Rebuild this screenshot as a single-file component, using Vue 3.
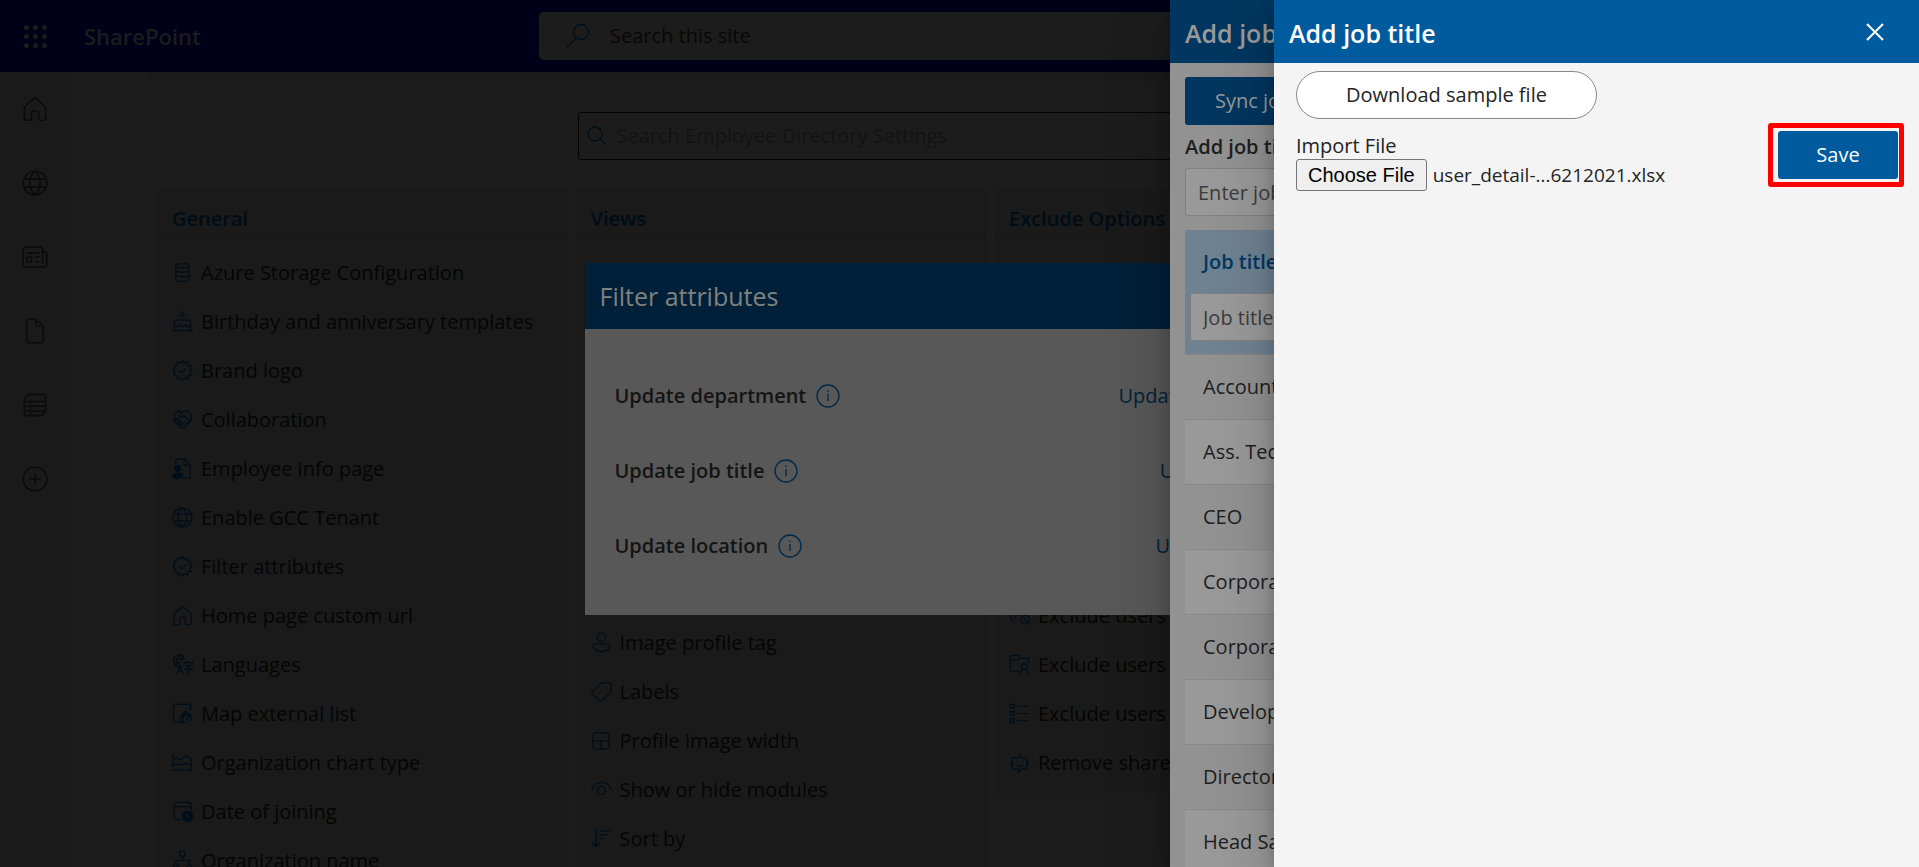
<script setup>
import { onMounted, ref } from 'vue'

const fileInput = ref(null)

onMounted(() => {
  const transfer = new DataTransfer()
  transfer.items.add(new File([''], 'user_detail-...6212021.xlsx'))
  fileInput.value.files = transfer.files
})

// Outline of a twelve-pointed seal centred on 11,11.
const seal = Array.from({ length: 24 }, (_, i) => {
  const r = i % 2 ? 8 : 10.3
  const a = (i * Math.PI) / 12
  return `${(11 + r * Math.sin(a)).toFixed(1)} ${(11 - r * Math.cos(a)).toFixed(1)}`
}).join('L')

const icons = {
  home: 'M2 9.5 11 1l9 8.500V19.500a1 1 0 0 1-1 1h-4a1 1 0 0 1-1-1V14a1 1 0 0 0-1-1h-4a1 1 0 0 0-1 1v5.500a1 1 0 0 1-1 1H3a1 1 0 0 1-1-1z',
  globe: 'M11 1a10 10 0 1 0 0 20 10 10 0 0 0 0-20zM11 1c-6 5-6 15 0 20M11 1c6 5 6 15 0 20M2 7.500h18M2 14.500h18',
  news: 'M17.500 16V5a2.500 2.500 0 0 0-2.500-2.500H3.500A2.500 2.500 0 0 0 1 5v12a2.500 2.500 0 0 0 2.500 2.500h15A2.500 2.500 0 0 0 21 17V8.500a2 2 0 0 0-2-2h-1.500M4 7.500h11M4 11h4v4H4zM11 11h4M11 15h4',
  doc: 'M6 1h6l6 6v12a2 2 0 0 1-2 2H6a2 2 0 0 1-2-2V3a2 2 0 0 1 2-2zM12 1v4.500A1.500 1.500 0 0 0 13.500 7H18',
  list: 'M6 2h12a2 2 0 0 1 2 2v12l-4 4H4a2 2 0 0 1-2-2V6zM2 8h18M2 12h18M2 16h17M7 8v12',
  plus: 'M11 1a10 10 0 1 0 0 20 10 10 0 0 0 0-20zM11 6v10M6 11h10',
  database: 'M4 4c0-3 14-3 14 0v14c0 3-14 3-14 0zM4 4c0 3 14 3 14 0M4 8.500c0 3 14 3 14 0M4 13c0 3 14 3 14 0',
  cake: 'M11 0.500c-2.500 3.500-2.500 5.500 0 5.500s2.500-2 0-5.500M0.500 20.500h21M2.500 20V11a1.500 1.500 0 0 1 1.500-1.500h14a1.500 1.500 0 0 1 1.500 1.500v9M2.500 14l3.500 3 2.500-3 2.500 3 2.500-3 2.500 3 3.500-3',
  badge: `M${seal}zM7.500 11l2.500 2.500 4.500-4.500`,
  hands: 'M3 11 2 7l4-5 5 1 5-1 4 4v6l-8 8-3-1-6-6 2-3 3 2 1 2 2 1 1 2 1 1M11 3 8 7c1 2 3 2 4 0l8 6M6 15l3-3M8 17l3-2M1 11l3 4M14 17l2-1-3-3M16 15l2-1',
  folderUser: 'M10 18H1.500V1.500h8l2 3h9V10M1.500 6h8l2-1.500M16 10a3 3 0 1 0 0 6 3 3 0 0 0 0-6M11.500 21.500c0-7 9-7 9 0',
  lang: 'M7.500 1a6 6 0 1 0 0 12M7.500 1a6 6 0 0 1 5.500 4M7.500 1c-3 3-3 8-1 11M7.500 1c2 1 2.500 3 2.500 6M1.500 5h12M1.500 9h7M5.500 20.500l3-8.500 3 8.500M6.500 18h4M13 11V9h8.500v2M17 7v2M14.500 12.500h5l-2.500 2v5l-1.500 1M13 16h9',
  map: 'M6 19.500H1.500V1.500h18V8M9 20.500V14l5-5.500 7 6M7 20.500h7M11.500 20V14l3-3 1.500 1.500v7M17 12l4 7M9 15l5-5',
  chart: 'M1 2v17h20.500M1.500 8l4-1.500 3.500 2 6-5 5 4.500v11M1.500 13.500c5-2 7 2 11-1 3-2 5 0 7 1.500',
  calendar: 'M9 19.500H5A3 3 0 0 1 2 16.500v-12a3 3 0 0 1 3-3h12a3 3 0 0 1 3 3V10M2 6h18',
  org: 'M8.500 1.500h5v5h-5zM11 7v4M4 16v-5h14v5M1.500 16h5v5h-5zM15.500 16h5v5h-5z',
  person: 'M11 1a4.500 4.500 0 1 0 0 9 4.500 4.500 0 0 0 0-9M4 12.500h14a2 2 0 0 1 2 2c0 8-18 8-18 0a2 2 0 0 1 2-2z',
  tag: 'M11 2h8a2 2 0 0 1 2 2v7l-9 9.500a2 2 0 0 1-3 0L1.500 14a2 2 0 0 1 0-3zM16.500 6v1.500',
  layout: 'M5 3h11a3 3 0 0 1 3 3v11a3 3 0 0 1-3 3H5a3 3 0 0 1-3-3V6a3 3 0 0 1 3-3zM2 11.500h17M10.500 11.500V20',
  eye: 'M1 11.500C4 1 18 1 21 11.500M11 7.500a4.300 4.300 0 1 0 0 8.600 4.300 4.300 0 0 0 0-8.600',
  sort: 'M5.500 1v18.500M1.500 15.500l4 4 4-4M9 3h11M9 7h8M9 11h5',
  block: 'M2 5c-2 4 0 10 2 12M6 6c-2 3 0 8 1 9M10 8c0 4 3 4 4 0M17 11a4.500 4.500 0 1 0 0 9 4.500 4.500 0 0 0 0-9M14 12.500l6 6',
  checklist: 'M1.500 1.500h4v4h-4zM1.500 9h4v4h-4zM1.500 16.500h4v4h-4zM7.500 3.500h4M13.500 3.500H21M7.500 11h5M14.500 11H21M7.500 18.500h4M13.500 18.500H21',
  bot: 'M11 1v5M5 6h12a1.500 1.500 0 0 1 1.500 1.500v9A1.500 1.500 0 0 1 17 18h-4l-3 3v-3H5a1.500 1.500 0 0 1-1.500-1.500v-9A1.500 1.500 0 0 1 5 6zM2 9.500v4M20 9.500v4M7 13.500c2 2 6 2 8 0M8 9.500v1M14 9.500v1',
  page: 'M4 6V3a2 2 0 0 1 2-2h7l6 6v12a2 2 0 0 1-2 2h-5M12.500 1v5a1.500 1.500 0 0 0 1.500 1.500h5'
}

const nav = [
  { label: 'Home', icon: 'home' },
  { label: 'Sites', icon: 'globe' },
  { label: 'News', icon: 'news' },
  { label: 'Files', icon: 'doc' },
  { label: 'Lists', icon: 'list' },
  { label: 'Create', icon: 'plus' }
]

const groups = [
  {
    name: 'General',
    mod: 'general',
    items: [
      ['database', 'Azure Storage Configuration'],
      ['cake', 'Birthday and anniversary templates'],
      ['badge', 'Brand logo'],
      ['hands', 'Collaboration'],
      ['page', 'Employee info page'],
      ['globe', 'Enable GCC Tenant'],
      ['badge', 'Filter attributes'],
      ['home', 'Home page custom url'],
      ['lang', 'Languages'],
      ['map', 'Map external list'],
      ['chart', 'Organization chart type'],
      ['calendar', 'Date of joining'],
      ['org', 'Organization name']
    ]
  },
  {
    name: 'Views',
    mod: 'views',
    items: [
      ['person', 'Image profile tag'],
      ['tag', 'Labels'],
      ['layout', 'Profile image width'],
      ['eye', 'Show or hide modules'],
      ['sort', 'Sort by']
    ]
  },
  {
    name: 'Exclude Options',
    mod: 'exclude',
    items: [
      ['block', 'Exclude users b'],
      ['folderUser', 'Exclude users c'],
      ['checklist', 'Exclude users b'],
      ['bot', 'Remove shared']
    ]
  }
]

const attributes = ['Update department', 'Update job title', 'Update location']
const titles = ['Account', 'Ass. Tech', 'CEO', 'Corporate', 'Corporate', 'Developer', 'Director', 'Head Sales']
</script>

<template>
  <div class="app">
    <header class="suite">
      <button class="waffle" type="button" aria-label="App launcher">
        <i v-for="n in 9" :key="n"></i>
      </button>
      <a class="brand" href="#">SharePoint</a>
      <label class="site-search">
        <svg viewBox="0 0 26 26" width="26" height="26"><circle cx="16" cy="9" r="7.500" /><path d="M11 15 2 24.500" /></svg>
        <input type="search" placeholder="Search this site" aria-label="Search this site" />
      </label>
    </header>

    <div class="main">
      <nav class="rail">
        <a v-for="n in nav" :key="n.label" href="#" :aria-label="n.label">
          <svg viewBox="0 0 22 22" width="26" height="26"><path :d="icons[n.icon]" /></svg>
        </a>
      </nav>
      <main class="content">
        <div class="strip"></div>
        <label class="settings-search">
          <svg viewBox="0 0 20 20" width="20" height="20"><circle cx="8" cy="8" r="7" /><path d="m13 13 6 6" /></svg>
          <input type="search" placeholder="Search Employee Directory Settings" aria-label="Search Employee Directory Settings" />
        </label>
        <div class="cards">
          <section v-for="g in groups" :key="g.name" class="card">
            <h2>{{ g.name }}</h2>
            <ul :class="g.mod">
              <li v-for="(it, i) in g.items" :key="i">
                <a href="#">
                  <svg viewBox="0 0 22 22" width="21" height="21">
                    <path :d="icons[it[0]]" />
                    <g v-if="it[0] === 'page'" class="solid"><circle cx="6" cy="11" r="3" /><path d="M1 18c0-3 10-3 10 0s-10 5-10 0z" /></g>
                    <g v-if="it[0] === 'calendar'"><circle class="solid" cx="16" cy="16" r="5.500" /><path class="hand" d="M16 13v3.500h3" /></g>
                  </svg>
                  <span>{{ it[1] }}</span>
                </a>
              </li>
            </ul>
          </section>
        </div>
      </main>
    </div>

    <section class="modal" role="dialog" aria-label="Filter attributes">
      <h2>Filter attributes</h2>
      <div class="modal-body">
        <div v-for="a in attributes" :key="a" class="attr">
          <strong>{{ a }}</strong>
          <svg viewBox="0 0 24 24" width="24" height="24"><circle cx="12" cy="12" r="11" /><path d="M12 10v7M12 6.500v1.500" /></svg>
          <a href="#">{{ a }}</a>
        </div>
      </div>
    </section>

    <aside class="panel back">
      <h2 class="panel-head">Add job title</h2>
      <div class="back-body">
        <button class="sync" type="button">Sync job title</button>
        <label class="field-label" for="job-new">Add job title</label>
        <input id="job-new" type="text" placeholder="Enter job title" />
        <table>
          <thead>
            <tr>
              <th>
                <label for="job-filter">Job title</label>
                <input id="job-filter" type="text" placeholder="Job title" />
              </th>
            </tr>
          </thead>
          <tbody>
            <tr v-for="(t, i) in titles" :key="i"><td>{{ t }}</td></tr>
          </tbody>
        </table>
      </div>
    </aside>

    <aside class="panel front" role="dialog" aria-label="Add job title">
      <header class="panel-head">
        <h2>Add job title</h2>
        <button class="close" type="button" aria-label="Close">
          <svg viewBox="0 0 18 18" width="18" height="18"><path d="m1 1 16 16M17 1 1 17" /></svg>
        </button>
      </header>
      <div class="front-body">
        <div class="import">
          <button class="download" type="button">Download sample file</button>
          <label for="import-file">Import File</label>
          <input id="import-file" ref="fileInput" type="file" />
        </div>
        <div class="highlight"><button class="save" type="button">Save</button></div>
      </div>
    </aside>
  </div>
</template>

<style>
body {
  overflow: hidden;
}
</style>

<style scoped>
* {
  box-sizing: border-box;
}
.app {
  position: relative;
  height: 100vh;
  overflow: hidden;
  display: flex;
  flex-direction: column;
  background: #1c1c1c;
  color: #050505;
  font: 20px/26px "Segoe UI", "Open Sans", "Noto Sans", sans-serif;
}
h2, ul {
  margin: 0;
  padding: 0;
}
a {
  color: inherit;
  text-decoration: none;
}
button, input {
  font: inherit;
  color: inherit;
}
input {
  min-width: 0;
  outline: 0;
}
svg {
  flex: none;
  fill: none;
  stroke: currentColor;
  stroke-width: 1.3;
}
.suite {
  flex: none;
  display: flex;
  align-items: center;
  height: 72px;
  background: #000019;
}
.waffle {
  display: grid;
  grid-template-columns: repeat(3, 5px);
  gap: 4px;
  margin: 0 0 0 24px;
  padding: 0;
  border: 0;
  background: none;
}
.waffle i {
  height: 5px;
  border-radius: 50%;
  background: #1c1c1c;
}
.brand {
  width: 455px;
  margin-left: 37px;
  font-size: 22px;
  font-weight: 600;
  color: #1c1c1c;
}
.site-search {
  display: flex;
  align-items: center;
  gap: 19px;
  width: 841px;
  height: 48px;
  padding: 0 26px;
  border-radius: 5px;
  background: #1c1c1c;
}
.site-search svg, .settings-search svg {
  color: #00101c;
}
.site-search input, .settings-search input {
  flex: 1;
  padding: 0;
  border: 0;
  background: none;
}
.site-search input::placeholder {
  color: #080808;
}
.settings-search input::placeholder {
  color: #131313;
}
.main {
  flex: 1;
  min-height: 0;
  display: flex;
}
.rail {
  flex: none;
  display: flex;
  flex-direction: column;
  gap: 48px;
  width: 72px;
  padding: 24px 0 0 22px;
  background: #1a1a1a;
  color: #0b0b0b;
}
.rail svg {
  display: block;
}
.content {
  flex: 1;
  min-width: 0;
  padding: 0 96px 0 85px;
}
.strip {
  height: 9px;
  margin: 0 0 31px -7px;
  background: #1a1a1a;
}
.settings-search {
  display: flex;
  align-items: center;
  gap: 10px;
  width: 825px;
  height: 48px;
  margin: 0 auto 29px;
  padding: 0 8px;
  border: 1px solid #050505;
  border-radius: 3px;
}
.cards {
  display: grid;
  grid-template-columns: repeat(4, 1fr);
  align-items: start;
  gap: 8px;
}
.card {
  background: #1a1a1a;
}
.card h2 {
  height: 51px;
  padding: 17px 15px 0;
  border-bottom: 1px solid #161616;
  font-size: 20px;
  font-weight: 600;
  color: #000c16;
}
.card ul {
  padding: 8px 15px 7px;
  list-style: none;
}
.card .views {
  padding-top: 378px;
}
.card .exclude {
  padding-top: 351px;
}
.card li a {
  display: flex;
  align-items: center;
  gap: 8px;
  height: 49px;
}
.card svg {
  color: #000e19;
}
.solid {
  fill: currentColor;
}
.hand {
  stroke: #1a1a1a;
}
.modal {
  position: absolute;
  top: 263px;
  left: calc(50% - 375px);
  width: 749px;
  background: #585858;
}
.modal h2 {
  height: 66px;
  padding: 0 15px;
  background: #002039;
  color: #808080;
  font-size: 25px;
  font-weight: 400;
  line-height: 66px;
}
.modal-body {
  padding: 29px 30px 32px;
}
.attr {
  display: flex;
  align-items: center;
  height: 75px;
}
.attr strong {
  font-weight: 600;
  color: #141414;
}
.attr svg {
  margin-left: 10px;
  color: #00294a;
}
.attr a {
  margin-left: auto;
  color: #00223c;
}
.panel {
  position: absolute;
  top: 0;
  right: 0;
  bottom: 0;
  max-width: 100%;
  box-shadow: 0 26px 58px rgba(0, 0, 0, 0.22), 0 5px 14px rgba(0, 0, 0, 0.18);
}
.back {
  width: 749px;
  background: #929292;
  color: #1e1e1e;
  overflow: hidden;
}
.front {
  width: 645px;
  background: #f4f4f4;
  color: #242424;
}
.panel-head {
  display: flex;
  justify-content: space-between;
  height: 63px;
  padding: 0 15px;
}
.panel-head, .panel-head h2 {
  font-size: 25px;
  font-weight: 600;
  line-height: 66px;
}
.back .panel-head {
  background: #00365f;
  color: #999;
}
.front .panel-head {
  background: #005a9e;
  color: #fff;
}
.close {
  align-self: center;
  display: flex;
  margin: 0 20px 0 0;
  padding: 0;
  border: 0;
  background: none;
}
.close svg {
  stroke-width: 2;
}
.back-body {
  display: flex;
  flex-direction: column;
  padding: 14px 15px 0;
}
.sync {
  align-self: flex-start;
  height: 48px;
  padding: 0 30px;
  border: 0;
  border-radius: 3px;
  background: #00365f;
  color: #999;
}
.field-label {
  margin: 9px 0 8px;
  font-weight: 600;
}
.back input {
  width: 100%;
  height: 48px;
  padding: 0 12px;
  border: 1px solid #808080;
  border-radius: 3px;
  background: #999;
}
.back input::placeholder {
  color: #3c3c3c;
}
table {
  width: 100%;
  margin-top: 14px;
  border-collapse: collapse;
}
th {
  height: 124px;
  padding: 19px 5px 0;
  vertical-align: top;
  background: #6f8292;
  text-align: left;
  font-weight: 600;
  color: #00365f;
}
th label {
  display: block;
  padding: 0 13px;
  margin-bottom: 18px;
}
th input {
  font-weight: 400;
}
td {
  height: 65px;
  padding: 0 18px;
  border-top: 1px solid #898989;
}
tbody tr:nth-child(even) {
  background: #999;
}
.front-body {
  display: flex;
  align-items: flex-start;
  justify-content: space-between;
  padding: 8px 15px 0 22px;
}
.import {
  display: flex;
  flex-direction: column;
  align-items: flex-start;
}
.download {
  width: 301px;
  height: 48px;
  margin-bottom: 14px;
  border: 1px solid #8a8886;
  border-radius: 24px;
  background: #fff;
}
.import input {
  width: 400px;
  height: 32px;
  font-size: 19px;
}
.import input::file-selector-button {
  height: 32px;
  margin: 0 6px 0 0;
  padding: 0 11px;
  border: 1px solid #767676;
  border-radius: 3px;
  background: #efefef;
  color: #000;
  font: 20px "Liberation Sans", Arial, sans-serif;
}
.highlight {
  margin-top: 52px;
  padding: 3px 1px 3px 5px;
  border: 5px solid #f00;
  border-radius: 3px;
}
.save {
  display: block;
  width: 120px;
  height: 48px;
  border: 0;
  border-radius: 3px;
  background: #005a9e;
  color: #fff;
}
</style>
